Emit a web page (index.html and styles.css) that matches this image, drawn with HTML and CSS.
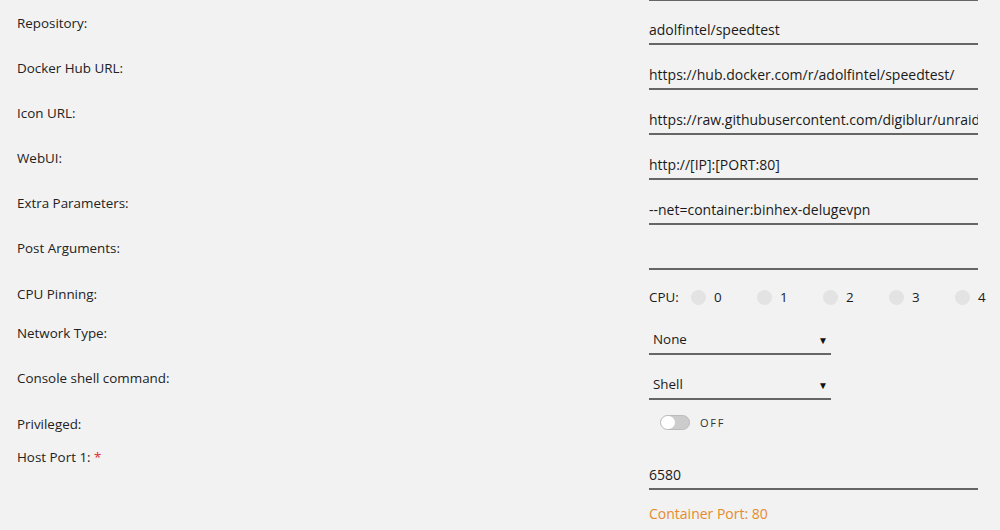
FILE: index.html
```html
<!DOCTYPE html>
<html lang="en">
<head>
<meta charset="UTF-8" />
<title>Update Container</title>
<link rel="stylesheet" href="styles.css">
</head>
<body>
<form class="settings">
  <div class="top-line"></div>

  <div class="row">
    <label class="label">Repository:</label>
    <input class="field" type="text" value="adolfintel/speedtest">
  </div>
  <div class="row">
    <label class="label">Docker Hub URL:</label>
    <input class="field" type="text" value="https://hub.docker.com/r/adolfintel/speedtest/">
  </div>
  <div class="row">
    <label class="label">Icon URL:</label>
    <input class="field" type="text" value="https://raw.githubusercontent.com/digiblur/unraid-docker-templates/master/images/speedtest.png">
  </div>
  <div class="row">
    <label class="label">WebUI:</label>
    <input class="field" type="text" value="http://[IP]:[PORT:80]">
  </div>
  <div class="row">
    <label class="label">Extra Parameters:</label>
    <input class="field" type="text" value="--net=container:binhex-delugevpn">
  </div>
  <div class="row">
    <label class="label">Post Arguments:</label>
    <input class="field" type="text" value="">
  </div>

  <div class="row row-cpu">
    <label class="label">CPU Pinning:</label>
    <div class="cpus">
      <span class="cpu-title">CPU:</span>
      <label class="cpu"><span class="dot"></span>0</label>
      <label class="cpu"><span class="dot"></span>1</label>
      <label class="cpu"><span class="dot"></span>2</label>
      <label class="cpu"><span class="dot"></span>3</label>
      <label class="cpu"><span class="dot"></span>4</label>
    </div>
  </div>

  <div class="row">
    <label class="label">Network Type:</label>
    <span class="select-wrap">
      <select class="select">
        <option>None</option>
      </select>
    </span>
  </div>
  <div class="row">
    <label class="label">Console shell command:</label>
    <span class="select-wrap">
      <select class="select">
        <option>Shell</option>
      </select>
    </span>
  </div>

  <div class="row row-priv">
    <label class="label">Privileged:</label>
    <div class="switch">
      <span class="track"><span class="knob"></span></span>
      <span class="switch-text">OFF</span>
    </div>
  </div>

  <div class="row row-port">
    <label class="label">Host Port 1: <span class="req">*</span></label>
    <div class="port">
      <input class="field" type="text" value="6580">
      <div class="hint">Container Port: 80</div>
    </div>
  </div>
</form>
</body>
</html>
```

FILE: styles.css
```css
body {
  margin: 0;
  background: #f2f2f2;
  font-family: 'Open Sans', 'Noto Sans', sans-serif;
  font-size: 13px;
  color: #1c1c1c;
  overflow: hidden;
}
.settings {
  margin: 0;
}
.top-line {
  margin-left: 649px;
  width: 329px;
  height: 1px;
  background: #666;
}
.row {
  display: flex;
  height: 45px;
}
.label {
  flex-shrink: 0;
  width: 632px;
  padding-left: 17px;
  padding-top: 13px;
  font-size: 13.4px;
  line-height: 18px;
  color: #222;
}
.field {
  flex-shrink: 0;
  width: 329px;
  height: 44px;
  box-sizing: border-box;
  margin: 0;
  padding: 19px 0 5px;
  border: none;
  border-bottom: 2px solid #666;
  background: transparent;
  font: inherit;
  font-size: 14px;
  line-height: 18px;
  color: #1a1a1a;
  outline: none;
}

/* cpu pinning */
.row-cpu {
  height: 40px;
}
.row-cpu .label {
  padding-top: 14px;
}
.cpus {
  display: flex;
  align-items: center;
  flex-shrink: 0;
  padding-top: 17px;
  height: 18px;
  font-size: 13.4px;
}
.cpu-title {
  width: 42px;
}
.cpu {
  display: flex;
  align-items: center;
  gap: 8px;
  width: 66px;
}
.dot {
  width: 15px;
  height: 15px;
  border-radius: 50%;
  background: #e3e3e3;
}

/* selects */
.select-wrap {
  position: relative;
  display: block;
  width: 182px;
}
.select {
  width: 182px;
  height: 44px;
  box-sizing: border-box;
  margin: 0;
  padding: 19px 0 5px 4px;
  border: none;
  border-bottom: 2px solid #666;
  border-radius: 0;
  background: transparent;
  font: inherit;
  font-size: 13.4px;
  line-height: 18px;
  color: #1a1a1a;
  -webkit-appearance: none;
  appearance: none;
  outline: none;
}
.select-wrap::after {
  content: "\25BC";
  position: absolute;
  right: 3px;
  top: 22px;
  font-size: 10px;
  color: #111;
  pointer-events: none;
}

/* switch */
.row-priv {
  height: 35px;
}
.row-priv .label {
  padding-top: 14px;
}
.switch {
  display: flex;
  align-items: center;
  gap: 10px;
  padding-left: 11px;
  padding-top: 14px;
  height: 14px;
}
.track {
  display: flex;
  align-items: center;
  width: 30px;
  height: 15px;
  box-sizing: border-box;
  border: 1px solid #bbb;
  border-radius: 8px;
  background: #ccc;
}
.knob {
  width: 14px;
  height: 13px;
  border-radius: 7px;
  background: #fff;
}
.switch-text {
  font-size: 11px;
  letter-spacing: 1.8px;
  color: #333;
}

/* host port */
.row-port {
  height: 94px;
}
.row-port .label {
  padding-top: 12px;
}
.port .field {
  height: 54px;
  padding-top: 29px;
}
.req {
  color: #e22828;
}
.hint {
  padding-top: 15px;
  font-size: 14px;
  line-height: 18px;
  color: #e68b2c;
}
```
